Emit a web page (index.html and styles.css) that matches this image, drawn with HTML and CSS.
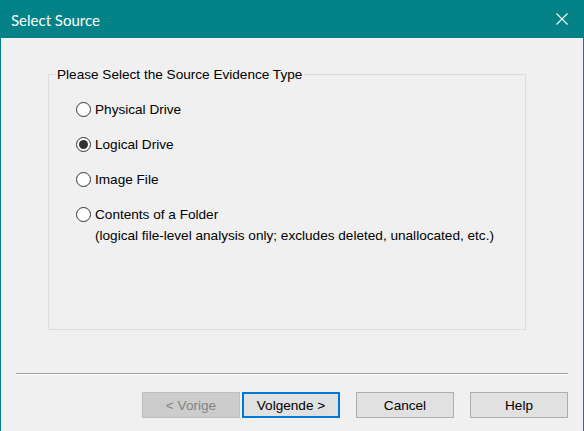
FILE: index.html
```html
<!DOCTYPE html>
<html>
<head>
<meta charset="utf-8">
<link rel="stylesheet" href="styles.css">
</head>
<body>
<div class="window">
  <div class="titlebar">
    <span class="title">Select Source</span>
    <svg class="close" width="12" height="12" viewBox="0 0 12 12"><path d="M0.5 0.5 L11.5 11.5 M11.5 0.5 L0.5 11.5" stroke="#fff" stroke-width="1.1" fill="none"/></svg>
  </div>
  <div class="content">
    <fieldset class="group">
      <legend class="legend">Please Select the Source Evidence Type</legend>
      <div class="options">
        <label class="option"><span class="radio"></span><span class="label">Physical Drive</span></label>
        <label class="option"><span class="radio checked"></span><span class="label">Logical Drive</span></label>
        <label class="option"><span class="radio"></span><span class="label">Image File</span></label>
        <div class="option-block">
          <label class="option"><span class="radio"></span><span class="label">Contents of a Folder</span></label>
          <div class="note">(logical file-level analysis only; excludes deleted, unallocated, etc.)</div>
        </div>
      </div>
    </fieldset>
    <div class="separator"></div>
    <div class="buttons">
      <button class="btn disabled">&lt; Vorige</button>
      <button class="btn default">Volgende &gt;</button>
      <button class="btn gap">Cancel</button>
      <button class="btn gap">Help</button>
    </div>
  </div>
</div>
</body>
</html>
```

FILE: styles.css
```css
html, body {
  margin: 0;
  padding: 0;
  background: #f0f0f0;
}
.window {
  width: 584px;
  height: 431px;
  box-sizing: border-box;
  border-left: 1px solid #038387;
  border-right: 1px solid #038387;
  background: #f0f0f0;
  display: flex;
  flex-direction: column;
  font-family: "Liberation Sans", Arial, sans-serif;
  font-size: 13.6px;
  color: #000;
}
.titlebar {
  height: 38px;
  margin: 0 -1px;
  background: #038387;
  display: flex;
  align-items: center;
  justify-content: space-between;
  padding: 0 16px 0 11px;
}
.title {
  font-family: Lato, "Open Sans", sans-serif;
  font-size: 15px;
  color: #fff;
  position: relative;
  top: 1px;
}
.close {
  display: block;
}
.content {
  flex: 1;
  display: flex;
  flex-direction: column;
}
.group {
  margin: 29px 0 0 47px;
  width: 478px;
  height: 263px;
  box-sizing: border-box;
  border: 1px solid #dcdcdc;
  padding: 0;
}
.legend {
  margin-left: 6px;
  padding: 0 2px;
  line-height: 15px;
}
.options {
  display: flex;
  flex-direction: column;
  gap: 20px;
  padding: 20px 0 0 27px;
}
.option {
  display: flex;
  align-items: center;
  height: 15px;
}
.radio {
  width: 13px;
  height: 13px;
  border: 1px solid #333;
  border-radius: 50%;
  background: #fff;
  box-sizing: content-box;
  display: flex;
  align-items: center;
  justify-content: center;
  margin-right: 4px;
}
.radio.checked::after {
  content: "";
  width: 9px;
  height: 9px;
  border-radius: 50%;
  background: #333;
}
.note {
  margin: 6px 0 0 19px;
  line-height: 15px;
}
.separator {
  margin: 43px 15px 0 15px;
  border-top: 1px solid #a0a0a0;
  border-bottom: 1px solid #fff;
  height: 0;
}
.buttons {
  display: flex;
  justify-content: flex-end;
  padding: 17px 15px 0 0;
}
.btn {
  width: 98px;
  height: 26px;
  box-sizing: border-box;
  background: #e1e1e1;
  border: 1px solid #adadad;
  font-family: "Liberation Sans", Arial, sans-serif;
  font-size: 13.6px;
  color: #000;
  padding: 0;
  margin: 0;
}
.btn.disabled {
  background: #cccccc;
  border-color: #bfbfbf;
  color: #838383;
}
.btn.default {
  border: 2px solid #0078d7;
  margin-left: 2px;
}
.btn.gap {
  margin-left: 16px;
}
```
